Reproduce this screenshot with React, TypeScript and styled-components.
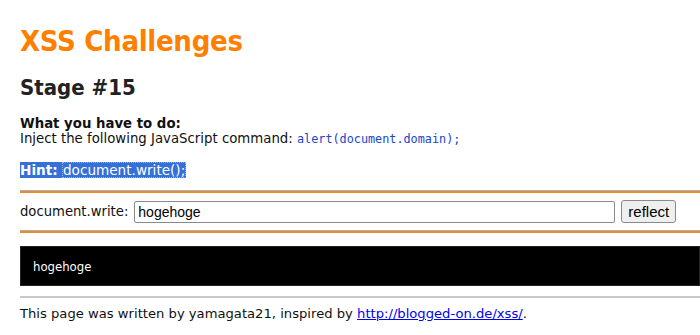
import React from "react";
import styled, { createGlobalStyle } from "styled-components";

const Global = createGlobalStyle`
  html, body { margin: 0; padding: 0; background: #ffffff; }
  body {
    font-family: "DejaVu Sans", Verdana, sans-serif;
    color: #222222;
    overflow: hidden;
  }
`;

const Page = styled.div`
  padding: 0 0 0 20px;
  width: 700px;
  box-sizing: border-box;
`;

const Title = styled.h1`
  margin: 25px 0 0;
  font-family: "DejaVu Sans Condensed", "DejaVu Sans", sans-serif;
  font-stretch: condensed;
  font-weight: bold;
  font-size: 29px;
  line-height: 33px;
  color: #ff7f00;
  letter-spacing: -0.3px;
`;

const Stage = styled.h2`
  margin: 17px 0 0;
  font-family: "DejaVu Sans Condensed", "DejaVu Sans", sans-serif;
  font-stretch: condensed;
  font-weight: bold;
  font-size: 22px;
  line-height: 26px;
  color: #222222;
`;

const Task = styled.div`
  margin-top: 15px;
  font-size: 13.3px;
  line-height: 15px;
  color: #111111;
`;

const Strong = styled.div`
  font-weight: bold;
`;

const Code = styled.code`
  font-family: "DejaVu Sans Mono", monospace;
  font-size: 11.8px;
  color: #2046c8;
`;

const HintLine = styled.div`
  margin-top: 15px;
  font-size: 13.6px;
  line-height: 17px;
`;

const Selected = styled.span`
  background: #3470d6;
  color: #ffffff;
`;

const HintLabel = styled.b`
  font-weight: bold;
`;

const HintCode = styled.span`
  outline: 1px dotted #a0b4d8;
  outline-offset: -1px;
  padding: 0 1px;
`;

const Rule = styled.div`
  height: 2px;
  background: #f28a24;
  border-top: 1px solid #9fb3c8;
`;

const FormRule = styled(Rule)`
  margin-top: 11px;
`;

const Form = styled.form`
  display: flex;
  align-items: center;
  height: 37px;
  font-size: 13px;
`;

const Label = styled.label`
  font-family: "DejaVu Sans", sans-serif;
  font-size: 13.2px;
  color: #111111;
  margin-right: 6px;
`;

const Input = styled.input`
  width: 481px;
  height: 22px;
  box-sizing: border-box;
  border: 1px solid #8a8a8a;
  border-radius: 2px;
  padding: 1px 3px;
  font-family: "Liberation Sans", Arial, sans-serif;
  font-size: 14px;
  color: #000000;
  margin: 0 6px 0 0;
`;

const Button = styled.button`
  height: 23px;
  box-sizing: border-box;
  padding: 0 6px;
  border: 1px solid #8a8a8a;
  border-radius: 3px;
  background: #efefef;
  font-family: "Liberation Sans", Arial, sans-serif;
  font-size: 15px;
  color: #000000;
`;

const Output = styled.div`
  margin-top: 13px;
  height: 40px;
  background: #000000;
  color: #ffffff;
  display: flex;
  align-items: center;
  padding-left: 12px;
  font-family: "DejaVu Sans Condensed", "DejaVu Sans", sans-serif;
  font-stretch: condensed;
  font-size: 13px;
  border: 1px solid #222;
  box-sizing: border-box;
`;

const GrayRule = styled.div`
  margin-top: 10px;
  height: 2px;
  background: #c8c8c8;
`;

const Footer = styled.div`
  margin-top: 8px;
  font-size: 13.15px;
  line-height: 16px;
  color: #111111;
`;

const Link = styled.a`
  color: #0000ee;
  text-decoration: underline;
`;

export default function App() {
  return (
    <>
      <Global />
      <Page>
        <Title>XSS Challenges</Title>
        <Stage>Stage #15</Stage>
        <Task>
          <Strong>What you have to do:</Strong>
          Inject the following JavaScript command: <Code>alert(document.domain);</Code>
        </Task>
        <HintLine>
          <Selected>
            <HintLabel>Hint:</HintLabel> <HintCode>document.write();</HintCode>
          </Selected>
        </HintLine>
        <FormRule />
        <Form onSubmit={(e) => e.preventDefault()}>
          <Label>document.write:</Label>
          <Input defaultValue="hogehoge" />
          <Button type="submit">reflect</Button>
        </Form>
        <Rule />
        <Output>hogehoge</Output>
        <GrayRule />
        <Footer>
          This page was written by yamagata21, inspired by{" "}
          <Link href="#">http://blogged-on.de/xss/</Link>.
        </Footer>
      </Page>
    </>
  );
}
